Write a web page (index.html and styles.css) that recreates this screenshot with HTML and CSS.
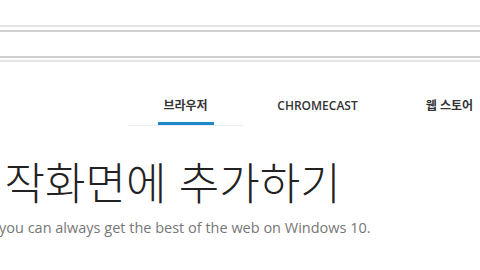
FILE: index.html
```html
<!DOCTYPE html>
<html lang="ko">
<head>
    <meta charset="UTF-8">
    <meta name="viewport" content="width=device-width, initial-scale=1.0">
    <title>Chrome</title>
    <link rel="stylesheet" href="styles.css">
</head>
<body>

    <div class="omnibox">
        <div class="omnibox-inner"></div>
    </div>

    <nav class="tabs">
        <a class="tab active">
            <span class="tab-label">브라우저</span>
            <span class="indicator"></span>
        </a>
        <a class="tab">
            <span class="tab-label">CHROMECAST</span>
            <span class="indicator"></span>
        </a>
        <a class="tab">
            <span class="tab-label">웹 스토어</span>
            <span class="indicator"></span>
        </a>
    </nav>

    <section class="hero">
        <h1 class="title">시작화면에 추가하기</h1>
        <p class="subtitle">you can always get the best of the web on Windows 10.</p>
    </section>

</body>
</html>
```

FILE: styles.css
```css
body {
    margin: 0;
    background: #fff;
    font-family: "Open Sans", "Noto Sans CJK KR", sans-serif;
    overflow: hidden;
}

.omnibox {
    margin-top: 25px;
    border-top: 2px solid #e4e4e4;
    border-bottom: 2px solid #e4e4e4;
    padding: 3px 0 2px;
}

.omnibox-inner {
    height: 24px;
    border-top: 2px solid #d0d0d0;
    border-bottom: 2px solid #d0d0d0;
}

.tabs {
    display: flex;
    gap: 17px;
    padding: 36px 0 0 128px;
}

.tab {
    flex-shrink: 0;
    width: 115px;
    display: flex;
    flex-direction: column;
    align-items: center;
    color: #333;
    font-size: 12px;
    font-weight: 600;
    line-height: 16px;
}

.indicator {
    width: 56px;
    height: 3px;
    margin-top: 8px;
}

.tab.active {
    border-bottom: 1px solid #ececec;
}

.tab.active .indicator {
    background: #1e88cc;
}

.hero {
    padding-top: 30px;
}

.title {
    margin: 0 0 0 -36px;
    font-family: "Noto Sans CJK KR", sans-serif;
    font-size: 44px;
    font-weight: 300;
    line-height: 50px;
    color: #222;
    white-space: nowrap;
}

.subtitle {
    margin: 12px 0 0 -1px;
    font-size: 14.5px;
    color: #777;
    white-space: nowrap;
}
```
